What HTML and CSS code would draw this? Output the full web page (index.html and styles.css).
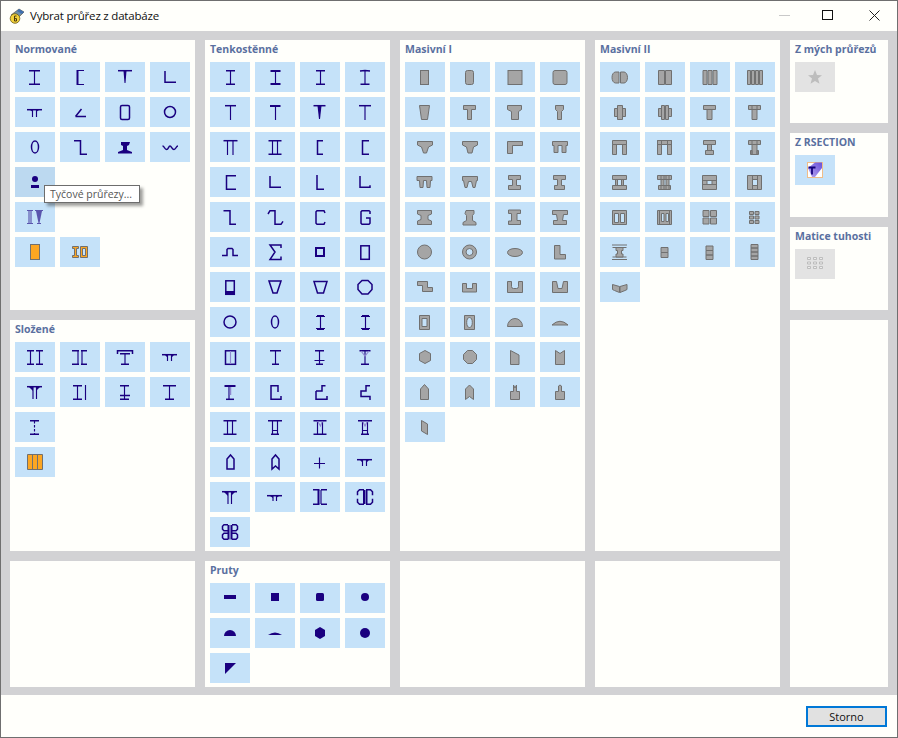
FILE: index.html
```html
<!DOCTYPE html>
<html lang="cs">
<head>
<meta charset="utf-8">
<title>Vybrat průřez z databáze</title>
<link rel="stylesheet" href="styles.css">
</head>
<body>
<div class="window">
<header class="titlebar">
<svg class="appicon" viewBox="0 0 16 16"><path class="ai-a" d="M2 7 10 1l5 3-7 7z"/><path class="ai-b" d="M10 1l5 3-2 2-5-3z"/><circle class="ai-c" cx="6" cy="10.5" r="4.8"/><path class="ai-d" d="M7.5 8H5.500v5h2v-2.400h-2"/></svg>
<span class="title">Vybrat průřez z databáze</span>
<div class="controls">
<span class="ctl"><i class="min"></i></span>
<span class="ctl"><i class="max"></i></span>
<span class="ctl"><svg class="close" viewBox="0 0 11 11"><path d="M.5.5l10 10M10.500.5l-10 10"/></svg></span>
</div>
</header>
<main class="content">

<div class="col">
<section class="panel h270"><h2>Normované</h2><div class="grid">
<button class="b"><svg class="n" viewBox="0 0 40 30"><path d="M14 22.500h11M19.500 9v13"/><path class="w15" d="M14 8.700h11M14 22.300h11"/></svg></button>
<button class="b"><svg class="n" viewBox="0 0 40 30"><path d="M24 8.500h-6M24 22.500h-6"/><path class="w2" d="M17.500 8v15"/></svg></button>
<button class="b"><svg class="n" viewBox="0 0 40 30"><path class="w15" d="M13 8.700h14"/><path class="s" d="M18.500 9h3l-1 12h-1z"/></svg></button>
<button class="b"><svg class="n" viewBox="0 0 40 30"><path class="w15" d="M15 9v11.300h11"/></svg></button>
<button class="b"><svg class="n" viewBox="0 0 40 30"><path class="w15" d="M12 12.700h15"/><path d="M17.500 13v7M21.500 13v7"/><path class="s" d="M15 13h3v2zM24 13h-3v2z"/></svg></button>
<button class="b"><svg class="n" viewBox="0 0 40 30"><path class="w15" d="M15.500 19.500H26M15.500 19.500l6-7.500"/></svg></button>
<button class="b"><svg class="n" viewBox="0 0 40 30"><rect class="w15" x="15.500" y="8.500" width="9" height="14" rx="1.500"/></svg></button>
<button class="b"><svg class="n" viewBox="0 0 40 30"><circle class="w15" cx="20" cy="15" r="5.500"/></svg></button>
<button class="b"><svg class="n" viewBox="0 0 40 30"><ellipse class="w15" cx="20" cy="15" rx="3.500" ry="6"/></svg></button>
<button class="b"><svg class="n" viewBox="0 0 40 30"><path class="w15" d="M14 8.700h6.500v13.600H27"/></svg></button>
<button class="b"><svg class="n" viewBox="0 0 40 30"><path class="s" d="M16 10h9l-1 3-2 1v4l5 2v1.500H13V20l5-2v-4l-2-1z"/></svg></button>
<button class="b"><svg class="n" viewBox="0 0 40 30"><path class="w15" d="M12.500 14c2 0 2 3.500 4 3.500s2-3.500 3.500-3.500 2 3.500 4 3.500 2-3.500 4-3.500"/></svg></button>
<button class="b hover"><svg class="n" viewBox="0 0 40 30"><circle class="s" cx="20" cy="12" r="3"/><path class="s" d="M16 18h8v3h-8z"/></svg></button>
<div class="gapcell"></div><div class="gapcell"></div><div class="gapcell"></div>
<button class="b"><svg class="n soft" viewBox="0 0 40 30"><path d="M12 8.500h6M12 21.500h6M14 9v12M16 9v12M20 8.500h8M22 21.500h4"/><path class="s" d="M21 9h6l-2.500 12h-1z"/></svg></button>
<div class="gapcell"></div><div class="gapcell"></div><div class="gapcell"></div>
<button class="b"><svg class="o" viewBox="0 0 40 30"><rect x="15.500" y="7.500" width="9" height="15"/></svg></button>
<button class="b"><svg class="o" viewBox="0 0 40 30"><path d="M12.500 9.500h6v2h-2v7h2v2h-6v-2h2v-7h-2z"/><path fill-rule="evenodd" d="M20.500 9.500h7v11h-7zM22.500 11.500v7h3v-7z"/></svg></button>
</div></section>

<section class="panel h231"><h2>Složené</h2><div class="grid">
<button class="b"><svg class="n" viewBox="0 0 40 30"><path class="w15" d="M12 8.700h7M12 22.300h7M21 8.700h7M21 22.300h7"/><path d="M15.500 9v13M24.500 9v13"/></svg></button>
<button class="b"><svg class="n" viewBox="0 0 40 30"><path class="w15" d="M12 8.700h7M12 22.300h7M21 8.700h6M21 22.300h6"/><path d="M18 9v13M22 9v13"/></svg></button>
<button class="b"><svg class="n" viewBox="0 0 40 30"><path class="w15" d="M12.500 12V8.700h15V12M15 11.700h10M16 22.300h8"/><path d="M20 12v10"/></svg></button>
<button class="b"><svg class="n" viewBox="0 0 40 30"><path class="w15" d="M12 12.700h15"/><path d="M17.500 13v6M21.500 13v6"/><path class="s" d="M15 13h3v3zM24 13h-3v3z"/></svg></button>
<button class="b"><svg class="n" viewBox="0 0 40 30"><path class="w15" d="M12 9.700h15"/><path d="M18 10v12M21.500 10v12"/><path class="s" d="M14 10h4v4zM25 10h-4v4z"/></svg></button>
<button class="b"><svg class="n" viewBox="0 0 40 30"><path class="w15" d="M13 8.700h9M13 22.300h9"/><path d="M17.500 9v13M25.500 8v15"/></svg></button>
<button class="b"><svg class="n" viewBox="0 0 40 30"><path class="w15" d="M15 8.700h9M15 22.300h9M15 18.500h10"/><path d="M19.500 9v13"/></svg></button>
<button class="b"><svg class="n" viewBox="0 0 40 30"><path class="w15" d="M13 8.700h13M15 22.300h9"/><path d="M19.500 9v13"/></svg></button>
<button class="b"><svg class="n" viewBox="0 0 40 30"><path class="w15" d="M15 8.700h9M15 22.300h9"/><path d="M19.500 9v2.500M19.500 13v2.500M19.500 17v2.500M19.500 21v1"/></svg></button>
<div class="gapcell"></div><div class="gapcell"></div><div class="gapcell"></div>
<button class="b"><svg class="o" viewBox="0 0 40 30"><path d="M12.500 7.500h15v15h-15zM17.500 7.500v15M22.500 7.500v15"/></svg></button>
</div></section>

<section class="panel h126"></section>
</div>

<div class="col">
<section class="panel h511"><h2>Tenkostěnné</h2><div class="grid">
<button class="b"><svg class="n" viewBox="0 0 40 30"><path class="w15" d="M16 8.700h9M16 22.300h9"/><path d="M20.500 9v13"/></svg></button>
<button class="b"><svg class="n" viewBox="0 0 40 30"><path class="w2" d="M15.500 9h10M15.500 22h10"/><path d="M20.500 9v13"/></svg></button>
<button class="b"><svg class="n" viewBox="0 0 40 30"><path class="w15" d="M16 8.700h9M16 22.300h9"/><path d="M20.500 9v13"/></svg></button>
<button class="b"><svg class="n" viewBox="0 0 40 30"><path class="w15" d="M15 9l5-.5 5 .5M15.500 22.300h9"/><path d="M20 9v13"/></svg></button>
<button class="b"><svg class="n" viewBox="0 0 40 30"><path class="w15" d="M15 8.700h11"/><path d="M20.500 9v14"/></svg></button>
<button class="b"><svg class="n" viewBox="0 0 40 30"><path class="w2" d="M15 9h10.500"/><path d="M20.500 9v14"/></svg></button>
<button class="b"><svg class="n" viewBox="0 0 40 30"><path class="w15" d="M13.500 8.700h12"/><path class="s" d="M17.500 9h4l-1.500 13h-1z"/></svg></button>
<button class="b"><svg class="n" viewBox="0 0 40 30"><path class="w15" d="M14 8.700h12"/><path d="M20 9v14"/></svg></button>
<button class="b"><svg class="n" viewBox="0 0 40 30"><path class="w15" d="M13.500 8.700h14"/><path d="M17.500 9v14M23 9v14"/></svg></button>
<button class="b"><svg class="n" viewBox="0 0 40 30"><path class="w15" d="M13.500 8.700h13M13.500 22.300h13"/><path d="M17.500 9v13M22.500 9v13"/></svg></button>
<button class="b"><svg class="n" viewBox="0 0 40 30"><path class="w15" d="M23 8.700h-5.500v13.600H23"/></svg></button>
<button class="b"><svg class="n" viewBox="0 0 40 30"><path class="w15" d="M24 8.700h-6.500v13.600H24"/></svg></button>
<button class="b"><svg class="n" viewBox="0 0 40 30"><path class="w15" d="M26 8.700h-9.500v13.600H26"/></svg></button>
<button class="b"><svg class="n" viewBox="0 0 40 30"><path class="w15" d="M15 9v11.300h11"/></svg></button>
<button class="b"><svg class="n" viewBox="0 0 40 30"><path class="w15" d="M17 8v14.300h7"/></svg></button>
<button class="b"><svg class="n" viewBox="0 0 40 30"><path class="w15" d="M15 9v11.300h10v-2"/></svg></button>
<button class="b"><svg class="n" viewBox="0 0 40 30"><path class="w15" d="M13.500 8.700h6.500v13.600h6"/></svg></button>
<button class="b"><svg class="n" viewBox="0 0 40 30"><path class="w15" d="M13 12l2-3.300h5v13.600h6l2-3"/></svg></button>
<button class="b"><svg class="n" viewBox="0 0 40 30"><path class="w15" d="M25 11l-1-2.300h-7l-1 1v11.600l1 1h7l1-2.300"/></svg></button>
<button class="b"><svg class="n" viewBox="0 0 40 30"><path class="w15" d="M25 12V9.500l-1-.8h-7l-1 1v11.600l1 1h7l1-1V16h-4"/></svg></button>
<button class="b"><svg class="n" viewBox="0 0 40 30"><path class="w15" d="M12 18.500h5v-6l1-1h4l1 1v6h5"/></svg></button>
<button class="b"><svg class="n" viewBox="0 0 40 30"><path class="w15" d="M26 11V8h-11l5 7-5 7.500h11v-3"/></svg></button>
<button class="b"><svg class="n" viewBox="0 0 40 30"><rect class="w2" x="16" y="11" width="8" height="8"/></svg></button>
<button class="b"><svg class="n" viewBox="0 0 40 30"><rect class="w15" x="15.800" y="8.800" width="8.500" height="13.500"/></svg></button>
<button class="b"><svg class="n" viewBox="0 0 40 30"><rect class="w15" x="15.800" y="8.800" width="8.500" height="13.500"/><path class="s" d="M15 19h10v4H15z"/></svg></button>
<button class="b"><svg class="n" viewBox="0 0 40 30"><path class="w15" d="M14 9h12l-4 12h-4z"/></svg></button>
<button class="b"><svg class="n" viewBox="0 0 40 30"><path class="w15" d="M14 9.500h13l-3.500 11.500h-6z"/></svg></button>
<button class="b"><svg class="n" viewBox="0 0 40 30"><path class="w15" d="M17 8.500h6l4 4v5l-4 4.500h-6l-4-4.500v-5z"/></svg></button>
<button class="b"><svg class="n" viewBox="0 0 40 30"><circle class="w15" cx="20" cy="15" r="6"/></svg></button>
<button class="b"><svg class="n" viewBox="0 0 40 30"><ellipse class="w15" cx="20" cy="15" rx="3.500" ry="6"/></svg></button>
<button class="b"><svg class="n" viewBox="0 0 40 30"><path class="w2" d="M17 9h7M17 22h7"/><path d="M20.500 9v13M16 9.500h9M16 21.500h9"/></svg></button>
<button class="b"><svg class="n" viewBox="0 0 40 30"><path class="w2" d="M17 9h7M17 22h7"/><path d="M20.500 9v13M16 9.500h9M16 21.500h9"/></svg></button>
<button class="b"><svg class="n" viewBox="0 0 40 30"><rect class="w15" x="15.500" y="8.800" width="10" height="13.500"/><path class="light" d="M20.500 9v13"/></svg></button>
<button class="b"><svg class="n" viewBox="0 0 40 30"><path class="w15" d="M15 8.700h11M17 22.300h7"/><path d="M20.500 9v13"/></svg></button>
<button class="b"><svg class="n" viewBox="0 0 40 30"><path class="w15" d="M15 8.700h9M16 22.300h7"/><path d="M19.500 9v13M14.500 18.500h10"/></svg></button>
<button class="b"><svg class="n" viewBox="0 0 40 30"><path class="w15" d="M14.500 8.700h11M16 22.300h8"/><path d="M20 9v13"/><path class="light" d="M16 9l4 5 4-5"/></svg></button>
<button class="b"><svg class="n" viewBox="0 0 40 30"><path class="w2" d="M14.500 9h11"/><path d="M19 10v12.500"/><path class="w15" d="M16 22.300h8"/><path class="light w15" d="M20.500 10v8"/></svg></button>
<button class="b"><svg class="n" viewBox="0 0 40 30"><path class="w15" d="M23 15V8.700h-7v13.600h10V19"/></svg></button>
<button class="b"><svg class="n" viewBox="0 0 40 30"><path class="w15" d="M16 14v8.300h11V19M16 14h6V8.700h3.500"/></svg></button>
<button class="b"><svg class="n" viewBox="0 0 40 30"><path class="w15" d="M25 8.700h-4V14h-5v5.500h9V23"/></svg></button>
<button class="b"><svg class="n" viewBox="0 0 40 30"><path class="w15" d="M13.500 8.700h13M13.500 22.300h13"/><path d="M17.500 9v13M22.500 9v13"/></svg></button>
<button class="b"><svg class="n" viewBox="0 0 40 30"><path class="w15" d="M13 8.700h14M16 22.300h8"/><path d="M17.500 9v13M22.500 9v13M17.500 18.500h5"/></svg></button>
<button class="b"><svg class="n" viewBox="0 0 40 30"><path class="w15" d="M13.500 8.700h13M13.500 22.300h13"/><path d="M17.500 9v13M22.500 9v13"/><path class="light" d="M17.500 9l3 5 2-5"/></svg></button>
<button class="b"><svg class="n" viewBox="0 0 40 30"><path class="w15" d="M13 8.700h14M16 22.300h8"/><path d="M17.500 9v13M22.500 9v13M17.500 18.500h5"/><path class="light" d="M17.500 9l2.500 5 2.500-5"/></svg></button>
<button class="b"><svg class="n" viewBox="0 0 40 30"><path class="w15" d="M17 22h7V12l-3.500-4-3.500 4z"/></svg></button>
<button class="b"><svg class="n" viewBox="0 0 40 30"><path class="w15" d="M17 12l3.500-4 3.500 4v10l-3.500-3-3.500 3z"/></svg></button>
<button class="b"><svg class="n" viewBox="0 0 40 30"><path d="M14 16.500h11M19.500 10.500v11"/></svg></button>
<button class="b"><svg class="n" viewBox="0 0 40 30"><path class="w15" d="M12 12.700h15"/><path d="M17.500 13v6M21.500 13v6"/><path class="s" d="M15 13h3v3zM24 13h-3v3z"/></svg></button>
<button class="b"><svg class="n" viewBox="0 0 40 30"><path class="w15" d="M12 9.700h15"/><path d="M18 10v12M21.500 10v12"/><path class="s" d="M14 10h4v4zM25 10h-4v4z"/></svg></button>
<button class="b"><svg class="n" viewBox="0 0 40 30"><path class="w15" d="M12 13.700h15"/><path d="M18 14v5M21.500 14v5"/><path class="s" d="M15 14h3v2zM24 14h-3v2z"/></svg></button>
<button class="b"><svg class="n" viewBox="0 0 40 30"><path class="w15" d="M13 7.700h6.500M13 22.300h6.500M21 7.700h6M21 22.300h6"/><path class="w2" d="M18.500 8v14"/><path d="M21 8v14"/></svg></button>
<button class="b"><svg class="n" viewBox="0 0 40 30"><path class="w15" d="M19 7.700h-4.500l-2 2v3.500M19 22.300h-4.500l-2-2v-3.500M21 7.700h4.500l2 2v3.500M21 22.300h4.500l2-2v-3.500"/><path class="w2" d="M19 8v14M21.500 8v14"/></svg></button>
<button class="b"><svg class="n" viewBox="0 0 40 30"><path class="w15" d="M18 7.700h-4l-1.500 1.500v3l1.500 1.500h4M18 22.300h-4l-1.500-1.500v-3l1.500-1.500h4M22 7.700h4l1.500 1.500v3L26 13.700h-4M22 22.300h4l1.500-1.500v-3L26 16.300h-4"/><path class="w2" d="M18.500 8v14.500M21.500 8v14.500"/></svg></button>
</div></section>

<section class="panel h126"><h2>Pruty</h2><div class="grid">
<button class="b"><svg class="n" viewBox="0 0 40 30"><path class="s" d="M14 12h12v4H14z"/></svg></button>
<button class="b"><svg class="n" viewBox="0 0 40 30"><path class="s" d="M16 10h8v8h-8z"/></svg></button>
<button class="b"><svg class="n" viewBox="0 0 40 30"><rect class="s" x="16" y="10" width="8" height="8" rx="1.500"/></svg></button>
<button class="b"><svg class="n" viewBox="0 0 40 30"><circle class="s" cx="20" cy="14" r="4"/></svg></button>
<button class="b"><svg class="n" viewBox="0 0 40 30"><path class="s" d="M14 18a6 6 0 0 1 12 0z"/></svg></button>
<button class="b"><svg class="n" viewBox="0 0 40 30"><path class="s" d="M13 17q7-5 14 0z"/></svg></button>
<button class="b"><svg class="n" viewBox="0 0 40 30"><path class="s" d="M20 9l5 3v6l-5 3-5-3v-6z"/></svg></button>
<button class="b"><svg class="n" viewBox="0 0 40 30"><circle class="s" cx="20" cy="15" r="5"/></svg></button>
<button class="b"><svg class="n" viewBox="0 0 40 30"><path class="s" d="M15 10h11L15 21z"/></svg></button>
</div></section>
</div>

<div class="col">
<section class="panel h511"><h2>Masivní I</h2><div class="grid">
<button class="b"><svg class="g" viewBox="0 0 40 30"><rect x="15.500" y="8.500" width="8" height="14"/></svg></button>
<button class="b"><svg class="g" viewBox="0 0 40 30"><rect x="15.500" y="8.500" width="8" height="14" rx="2"/></svg></button>
<button class="b"><svg class="g" viewBox="0 0 40 30"><rect x="13" y="8.500" width="14" height="14"/></svg></button>
<button class="b"><svg class="g" viewBox="0 0 40 30"><rect x="13" y="8.500" width="14" height="14" rx="2"/></svg></button>
<button class="b"><svg class="g" viewBox="0 0 40 30"><path d="M14.500 8.500h10l-2 14h-6z"/></svg></button>
<button class="b"><svg class="g" viewBox="0 0 40 30"><path d="M13.500 8.500h12v4h-4v10h-4v-10h-4z"/></svg></button>
<button class="b"><svg class="g" viewBox="0 0 40 30"><path d="M12.500 8.500h14v4l-3 2v8h-7v-8l-4-2z"/></svg></button>
<button class="b"><svg class="g" viewBox="0 0 40 30"><path d="M15.500 8.500h8v4l-2 2v8h-4v-8l-2-2z"/></svg></button>
<button class="b"><svg class="g" viewBox="0 0 40 30"><path d="M12.500 9.500h15v3.500l-4 2-2 6h-3l-2-6-4-2z"/></svg></button>
<button class="b"><svg class="g" viewBox="0 0 40 30"><path d="M12.500 9.500h15v3.500l-4 2-1.500 6h-4l-1.500-6-4-2z"/></svg></button>
<button class="b"><svg class="g" viewBox="0 0 40 30"><path d="M12.500 9.500h15v4h-10v8h-5z"/></svg></button>
<button class="b"><svg class="g" viewBox="0 0 40 30"><path d="M12.500 9.500h15v4h-1.500v7h-4v-7h-4v7h-4v-7h-1.500z"/></svg></button>
<button class="b"><svg class="g" viewBox="0 0 40 30"><path d="M12 9.500h15v4h-1.500l-.5 7h-3l-.5-7h-3l-.5 7h-3l-.5-7H12z"/></svg></button>
<button class="b"><svg class="g" viewBox="0 0 40 30"><path d="M12.500 9.500h15v4h-1l-1.500 7h-2l-1.500-6h-3l-1.500 6h-2l-1.500-7h-1z"/></svg></button>
<button class="b"><svg class="g" viewBox="0 0 40 30"><path d="M13.500 8.500h12v4h-4v6h4v4h-12v-4h4v-6h-4z"/></svg></button>
<button class="b"><svg class="g" viewBox="0 0 40 30"><path d="M13.500 8.500h12v4h-4v6h3v4h-10v-4h3v-6h-4z"/></svg></button>
<button class="b"><svg class="g" viewBox="0 0 40 30"><path d="M12.500 8.500h14v3.500l-3.500 1.500v4l3.500 1.500v3.500h-14V19l3.500-1.500v-4l-3.500-1.500z"/></svg></button>
<button class="b"><svg class="g" viewBox="0 0 40 30"><path d="M16 8.500h8v3l-1.500 2v5l3.500 2v2.500h-13V20.500l3.500-2v-5l-1.500-2z"/></svg></button>
<button class="b"><svg class="g" viewBox="0 0 40 30"><path d="M13.500 8h12v3.500h-3.500v7h3.500v4h-12V19h3v-7.500h-3z"/></svg></button>
<button class="b"><svg class="g" viewBox="0 0 40 30"><path d="M12.500 8.500h15v4h-4l-1 6h4v4h-13v-4h4l-1-6h-4z"/></svg></button>
<button class="b"><svg class="g" viewBox="0 0 40 30"><circle cx="19.500" cy="15" r="7"/></svg></button>
<button class="b"><svg class="g" viewBox="0 0 40 30"><path fill-rule="evenodd" d="M19.500 8a7 7 0 1 0 0 14 7 7 0 0 0 0-14zm0 3.500a3.500 3.500 0 1 1 0 7 3.500 3.500 0 0 1 0-7z"/></svg></button>
<button class="b"><svg class="g" viewBox="0 0 40 30"><ellipse cx="20" cy="15.500" rx="7.500" ry="4"/></svg></button>
<button class="b"><svg class="g" viewBox="0 0 40 30"><path d="M14.500 8.500h5.500v9h5.500v4.500h-11z"/></svg></button>
<button class="b"><svg class="g" viewBox="0 0 40 30"><path d="M12.500 9.500h10v6h5v4h-10v-6h-5z"/></svg></button>
<button class="b"><svg class="g" viewBox="0 0 40 30"><path d="M12.500 11.500h4v5h6v-5h4v8.500h-14z"/></svg></button>
<button class="b"><svg class="g" viewBox="0 0 40 30"><path d="M12.500 9.500h4v5q0 2 2 2h3q2 0 2-2v-5h4v11h-15z"/></svg></button>
<button class="b"><svg class="g" viewBox="0 0 40 30"><path d="M12.500 9.500h4l1.500 7h4l1.500-7h4v11h-15z"/></svg></button>
<button class="b"><svg class="g" viewBox="0 0 40 30"><path fill-rule="evenodd" d="M14.500 8.500h10v14h-10zM17 11.500v8h5v-8z"/></svg></button>
<button class="b"><svg class="g" viewBox="0 0 40 30"><path fill-rule="evenodd" d="M14.500 8.500h10v14h-10zM19.500 10.500c-1.800 0-2.800 2-2.800 5s1 5 2.800 5 2.800-2 2.800-5-1-5-2.800-5z"/></svg></button>
<button class="b"><svg class="g" viewBox="0 0 40 30"><path d="M12.500 19.500a7.500 8 0 0 1 15 0z"/></svg></button>
<button class="b"><svg class="g" viewBox="0 0 40 30"><path d="M12 18q8-7.500 16 0z"/></svg></button>
<button class="b"><svg class="g" viewBox="0 0 40 30"><path d="M20 8.500l5.500 3v7l-5.500 3-5.500-3v-7z"/></svg></button>
<button class="b"><svg class="g" viewBox="0 0 40 30"><path d="M17.500 8.500h5l4 4v5l-4 4h-5l-4-4v-5z"/></svg></button>
<button class="b"><svg class="g" viewBox="0 0 40 30"><path d="M15.500 8.500l8.500 4.500v9.500h-8.500z"/></svg></button>
<button class="b"><svg class="g" viewBox="0 0 40 30"><path d="M15.500 8.500l4.500 3 4.500-3v14h-9z"/></svg></button>
<button class="b"><svg class="g" viewBox="0 0 40 30"><path d="M15.500 12l4-4.500 4 4.500v10.500h-8z"/></svg></button>
<button class="b"><svg class="g" viewBox="0 0 40 30"><path d="M15.500 12l4-4 4 4v10.500l-4-3-4 3z"/></svg></button>
<button class="b"><svg class="g" viewBox="0 0 40 30"><path d="M15.500 14.500h3V8l1.500 3 1.500-3v6.500h3v8h-9z"/></svg></button>
<button class="b"><svg class="g" viewBox="0 0 40 30"><path d="M15.500 14.500h3V9l1.500-1 1.500 1v5.500h3v8h-9z"/></svg></button>
<button class="b"><svg class="g" viewBox="0 0 40 30"><path d="M16.500 8.500l6 3.500v10.500l-6-3.500z"/></svg></button>
</div></section>
<section class="panel h126"></section>
</div>

<div class="col">
<section class="panel h511"><h2>Masivní II</h2><div class="grid">
<button class="b"><svg class="g" viewBox="0 0 40 30"><path d="M19 10h-3.500a3.500 5.500 0 0 0 0 11H19zM20.500 10H24a3.500 5.500 0 0 1 0 11h-3.500z"/></svg></button>
<button class="b"><svg class="g" viewBox="0 0 40 30"><path d="M13.500 8.500h6v14h-6zM20.500 8.500h6v14h-6z"/></svg></button>
<button class="b"><svg class="g" viewBox="0 0 40 30"><path d="M13 8.500h4v14h-4zM18 8.500h4v14h-4zM23 8.500h4v14h-4z"/></svg></button>
<button class="b"><svg class="g" viewBox="0 0 40 30"><path d="M12.500 8.500h3v14h-3zM16.500 8.500h3v14h-3zM20.500 8.500h3v14h-3zM24.500 8.500h3v14h-3z"/></svg></button>
<button class="b"><svg class="g" viewBox="0 0 40 30"><path d="M14.500 11.500h3v8h-3zM22.500 11.500h3v8h-3zM17.500 8.500h5v14h-5z"/></svg></button>
<button class="b"><svg class="g" viewBox="0 0 40 30"><path d="M13.500 11.500h3v8h-3zM23.500 11.500h3v8h-3zM16.500 8.500h3v14h-3zM20.500 8.500h3v14h-3z"/></svg></button>
<button class="b"><svg class="g" viewBox="0 0 40 30"><path d="M13.500 8.500h12v4h-12zM17 12.500h5v10h-5z"/></svg></button>
<button class="b"><svg class="g" viewBox="0 0 40 30"><path d="M13.500 8.500h12v4h-12zM17 12.500h5v10h-5zM17 8.500h5v4h-5z"/></svg></button>
<button class="b"><svg class="g" viewBox="0 0 40 30"><path d="M12.500 8.500h14v4h-14zM12.500 12.500h4v10h-4zM22.500 12.500h4v10h-4z"/></svg></button>
<button class="b"><svg class="g" viewBox="0 0 40 30"><path d="M12.500 8.500h14v4h-14zM12.500 8.500h4v14h-4zM22.500 8.500h4v14h-4z"/></svg></button>
<button class="b"><svg class="g" viewBox="0 0 40 30"><path d="M13.500 8.500h12v4h-12zM17.500 12.500h4v6h-4zM15.500 18.500h8v4h-8z"/></svg></button>
<button class="b"><svg class="g" viewBox="0 0 40 30"><path d="M13.500 8.500h12v4h-12zM17 8.500h5v14h-5zM15.500 18.500h1.500v4h-1.500zM22 18.500h1.500v4H22z"/></svg></button>
<button class="b"><svg class="g" viewBox="0 0 40 30"><path d="M12.500 8.500h14v4h-14zM15.500 12.500h2v6h-2zM21.500 12.500h2v6h-2zM12.500 18.500h14v4h-14z"/></svg></button>
<button class="b"><svg class="g" viewBox="0 0 40 30"><path d="M12.500 8.500h14v4h-14zM16 8.500h3v14h-3zM21 8.500h3v14h-3zM13.500 18.500h12v4h-12z"/></svg></button>
<button class="b"><svg class="g" viewBox="0 0 40 30"><path fill-rule="evenodd" d="M12.500 8.500h14v14h-14zM17 13.500v4h5v-4z"/><path d="M12.500 13.500h14M12.500 17.500h14"/></svg></button>
<button class="b"><svg class="g" viewBox="0 0 40 30"><path fill-rule="evenodd" d="M12.500 8.500h14v14h-14zM17.500 12.500v6h5v-6z"/><path d="M17.500 8.500v14M22.500 8.500v14"/></svg></button>
<button class="b"><svg class="g" viewBox="0 0 40 30"><path fill-rule="evenodd" d="M12.500 8.500h14v14h-14zM14.500 11.500v9h4v-9zM20.500 11.500v9h4v-9z"/></svg></button>
<button class="b"><svg class="g" viewBox="0 0 40 30"><path fill-rule="evenodd" d="M12.500 8.500h14v14h-14zM16.500 11.500v8h2.500v-8zM21 11.500v8h2.500v-8z"/><path d="M14.500 8.500v14M24.500 8.500v14"/></svg></button>
<button class="b"><svg class="g" viewBox="0 0 40 30"><path d="M13 8.500h6v6h-6zM20.500 8.500h6v6h-6zM13 16h6v6h-6zM20.500 16h6v6h-6z"/></svg></button>
<button class="b"><svg class="g" viewBox="0 0 40 30"><path d="M14.500 9.500h4v3h-4zM20 9.500h4v3h-4zM14.500 14h4v3h-4zM20 14h4v3h-4zM14.500 18.500h4v3h-4zM20 18.500h4v3h-4z"/></svg></button>
<button class="b"><svg class="g" viewBox="0 0 40 30"><path d="M12 8h15M12 22.500h15"/><path d="M12.500 10.500h14M12.500 20h14"/><path d="M16 10.500h7v3h-1.500v3.500h1.500v3h-7v-3h1.500v-3.500H16z"/></svg></button>
<button class="b"><svg class="g" viewBox="0 0 40 30"><path d="M16 10.500h7v5h-7zM16 15.500h7v5h-7z"/></svg></button>
<button class="b"><svg class="g" viewBox="0 0 40 30"><path d="M16 9h7v4.500h-7zM16 13.500h7V18h-7zM16 18h7v4.500h-7z"/></svg></button>
<button class="b"><svg class="g" viewBox="0 0 40 30"><path d="M16 7.500h7V11h-7zM16 11h7v4h-7zM16 15h7v4h-7zM16 19h7v3.500h-7z"/></svg></button>
<button class="b"><svg class="g" viewBox="0 0 40 30"><path d="M12.500 12.500l7 2v6l-5-2-2-1zM27 12.500l-7 2v6l5-2 2-1z"/></svg></button>
</div></section>
<section class="panel h126"></section>
</div>

<div class="col narrow">
<section class="panel side1"><h2>Z mých průřezů</h2><div class="grid">
<button class="b off"><svg class="star" viewBox="0 0 40 30"><path d="M20 8l2 5 5 .3-4 3.300 1.500 5.200L20 19l-4.500 2.800L17 16.600l-4-3.300 5-.3z"/></svg></button>
</div></section>
<section class="panel side2"><h2>Z RSECTION</h2><div class="grid">
<button class="b"><svg class="rs" viewBox="0 0 40 30"><defs><linearGradient id="prism" x1="0" y1="1" x2="1" y2="0"><stop offset="0" stop-color="#b8a8f0"/><stop offset="1" stop-color="#6a50d8"/></linearGradient></defs><rect class="rs-box" x="12.500" y="7.500" width="15" height="15"/><path class="rs-p" d="M13 13l7-5.500h7V13l-7 9h-3z"/><path class="rs-t" d="M13.500 12.500h7M17 12.500v7"/></svg></button>
</div></section>
<section class="panel side3"><h2>Matice tuhosti</h2><div class="grid">
<button class="b off"><svg class="mx" viewBox="0 0 40 30"><path d="M12.500 8.500h3v2h-3zM18.500 8.500h3v2h-3zM24.500 8.500h3v2h-3zM12.500 13h3v2h-3zM18.500 13h3v2h-3zM24.500 13h3v2h-3zM12.500 17.500h3v2h-3zM18.500 17.500h3v2h-3zM24.500 17.500h3v2h-3z"/></svg></button>
</div></section>
<section class="panel side4"></section>
</div>

<div class="tooltip">Tyčové průřezy...</div>
</main>
<footer class="footer"><button class="storno">Storno</button></footer>
</div>
</body>
</html>
```
FILE: styles.css
```css
* { box-sizing: border-box; }
html, body { margin: 0; height: 100%; }
body { font-family: "Open Sans", "Noto Sans", sans-serif; background: #fffffb; }
.window { width: 898px; height: 738px; display: flex; flex-direction: column; border: 1px solid #6f6f6f; background: #fffffb; }
.titlebar { height: 30px; display: flex; align-items: center; padding-left: 8px; background: #fffffb; flex: none; }
.appicon { width: 16px; height: 16px; flex: none; }
.ai-a { fill: #6f8fa8; stroke: #5a4a28; stroke-width: .6; }
.ai-b { fill: #3f6fb0; }
.ai-c { fill: #f3d23a; stroke: #6a5a1c; stroke-width: .8; }
.ai-d { fill: none; stroke: #4a3a10; stroke-width: 1; }
.title { margin-left: 5px; margin-bottom: 2px; font-size: 11.5px; letter-spacing: -.2px; color: #111; }
.controls { margin-left: auto; display: flex; }
.ctl { width: 45px; height: 30px; padding-bottom: 2px; display: flex; align-items: center; justify-content: center; }
.min { display: block; width: 11px; height: 1px; background: #c9c9c9; }
.max { display: block; width: 11px; height: 10px; margin-right: 4px; border: 1px solid #111; }
.close { width: 11px; height: 11px; fill: none; stroke: #222; stroke-width: 1; }
.content { position: relative; flex: none; height: 664px; display: flex; gap: 10px; padding: 9px 9px 8px 9px; background: #d2d2d4; }
.col { width: 185px; flex: none; display: flex; flex-direction: column; gap: 10px; }
.narrow { width: 98px; }
.panel { background: #fffffb; padding: 0 5px; flex: none; }
.h270 { height: 270px; }
.h231 { height: 231px; }
.h126 { height: 126px; }
.h511 { height: 511px; }
.side1 { height: 83px; }
.side2 { height: 84px; }
.side3 { height: 83px; }
.side4 { height: 367px; }
h2 { margin: 0; height: 22px; padding-top: 2px; font-size: 10.5px; line-height: 15px; font-weight: 700; color: #5a70a0; white-space: nowrap; }
.grid { display: grid; grid-template-columns: repeat(4, 40px); grid-auto-rows: 30px; gap: 5px; }
.narrow .grid { grid-template-columns: 40px; }
.gapcell { height: 30px; }
.b { width: 40px; height: 30px; padding: 0; border: 0; background: #c5e2f9; display: block; }
.b svg { display: block; width: 40px; height: 30px; }
.hover { background: #bcd9f0; }
.off { background: #e3e3e3; }
.n { fill: none; stroke: #1a0080; stroke-width: 1.15; }
.n .s { fill: #1a0080; stroke: none; }
.n .w15 { stroke-width: 1.5; }
.n .w2 { stroke-width: 2; }
.n .light { stroke: #8f88d0; }
.soft { opacity: .62; }
.g { fill: #a5a5a5; stroke: #707070; stroke-width: 1; }
.o { fill: #fca622; stroke: #707070; stroke-width: 1; }
.star { fill: #bdbdbd; }
.mx { fill: #ececec; stroke: #b4b4b4; stroke-width: .8; }
.rs-box { fill: #fff; stroke: #f0bd88; stroke-width: 1; }
.rs-p { fill: url(#prism); }
.rs-t { fill: none; stroke: #14007a; stroke-width: 1.8; }
.tooltip { position: absolute; left: 43px; top: 154px; width: 96px; height: 18px; background: #fff; border: 1px solid #6d6d6d; box-shadow: 3px 3px 3px rgba(0,0,0,.38); font-size: 10.5px; line-height: 16px; color: #555; padding-left: 5px; white-space: nowrap; }
.footer { flex: 1; display: flex; justify-content: flex-end; align-items: flex-start; padding: 11px 10px 0 0; background: #fffffb; }
.storno { width: 81px; height: 21px; padding: 0; border: 2px solid #0078d7; background: #e1e1e1; font-family: "Open Sans", "Noto Sans", sans-serif; font-size: 11px; line-height: 16px; color: #111; }
```
